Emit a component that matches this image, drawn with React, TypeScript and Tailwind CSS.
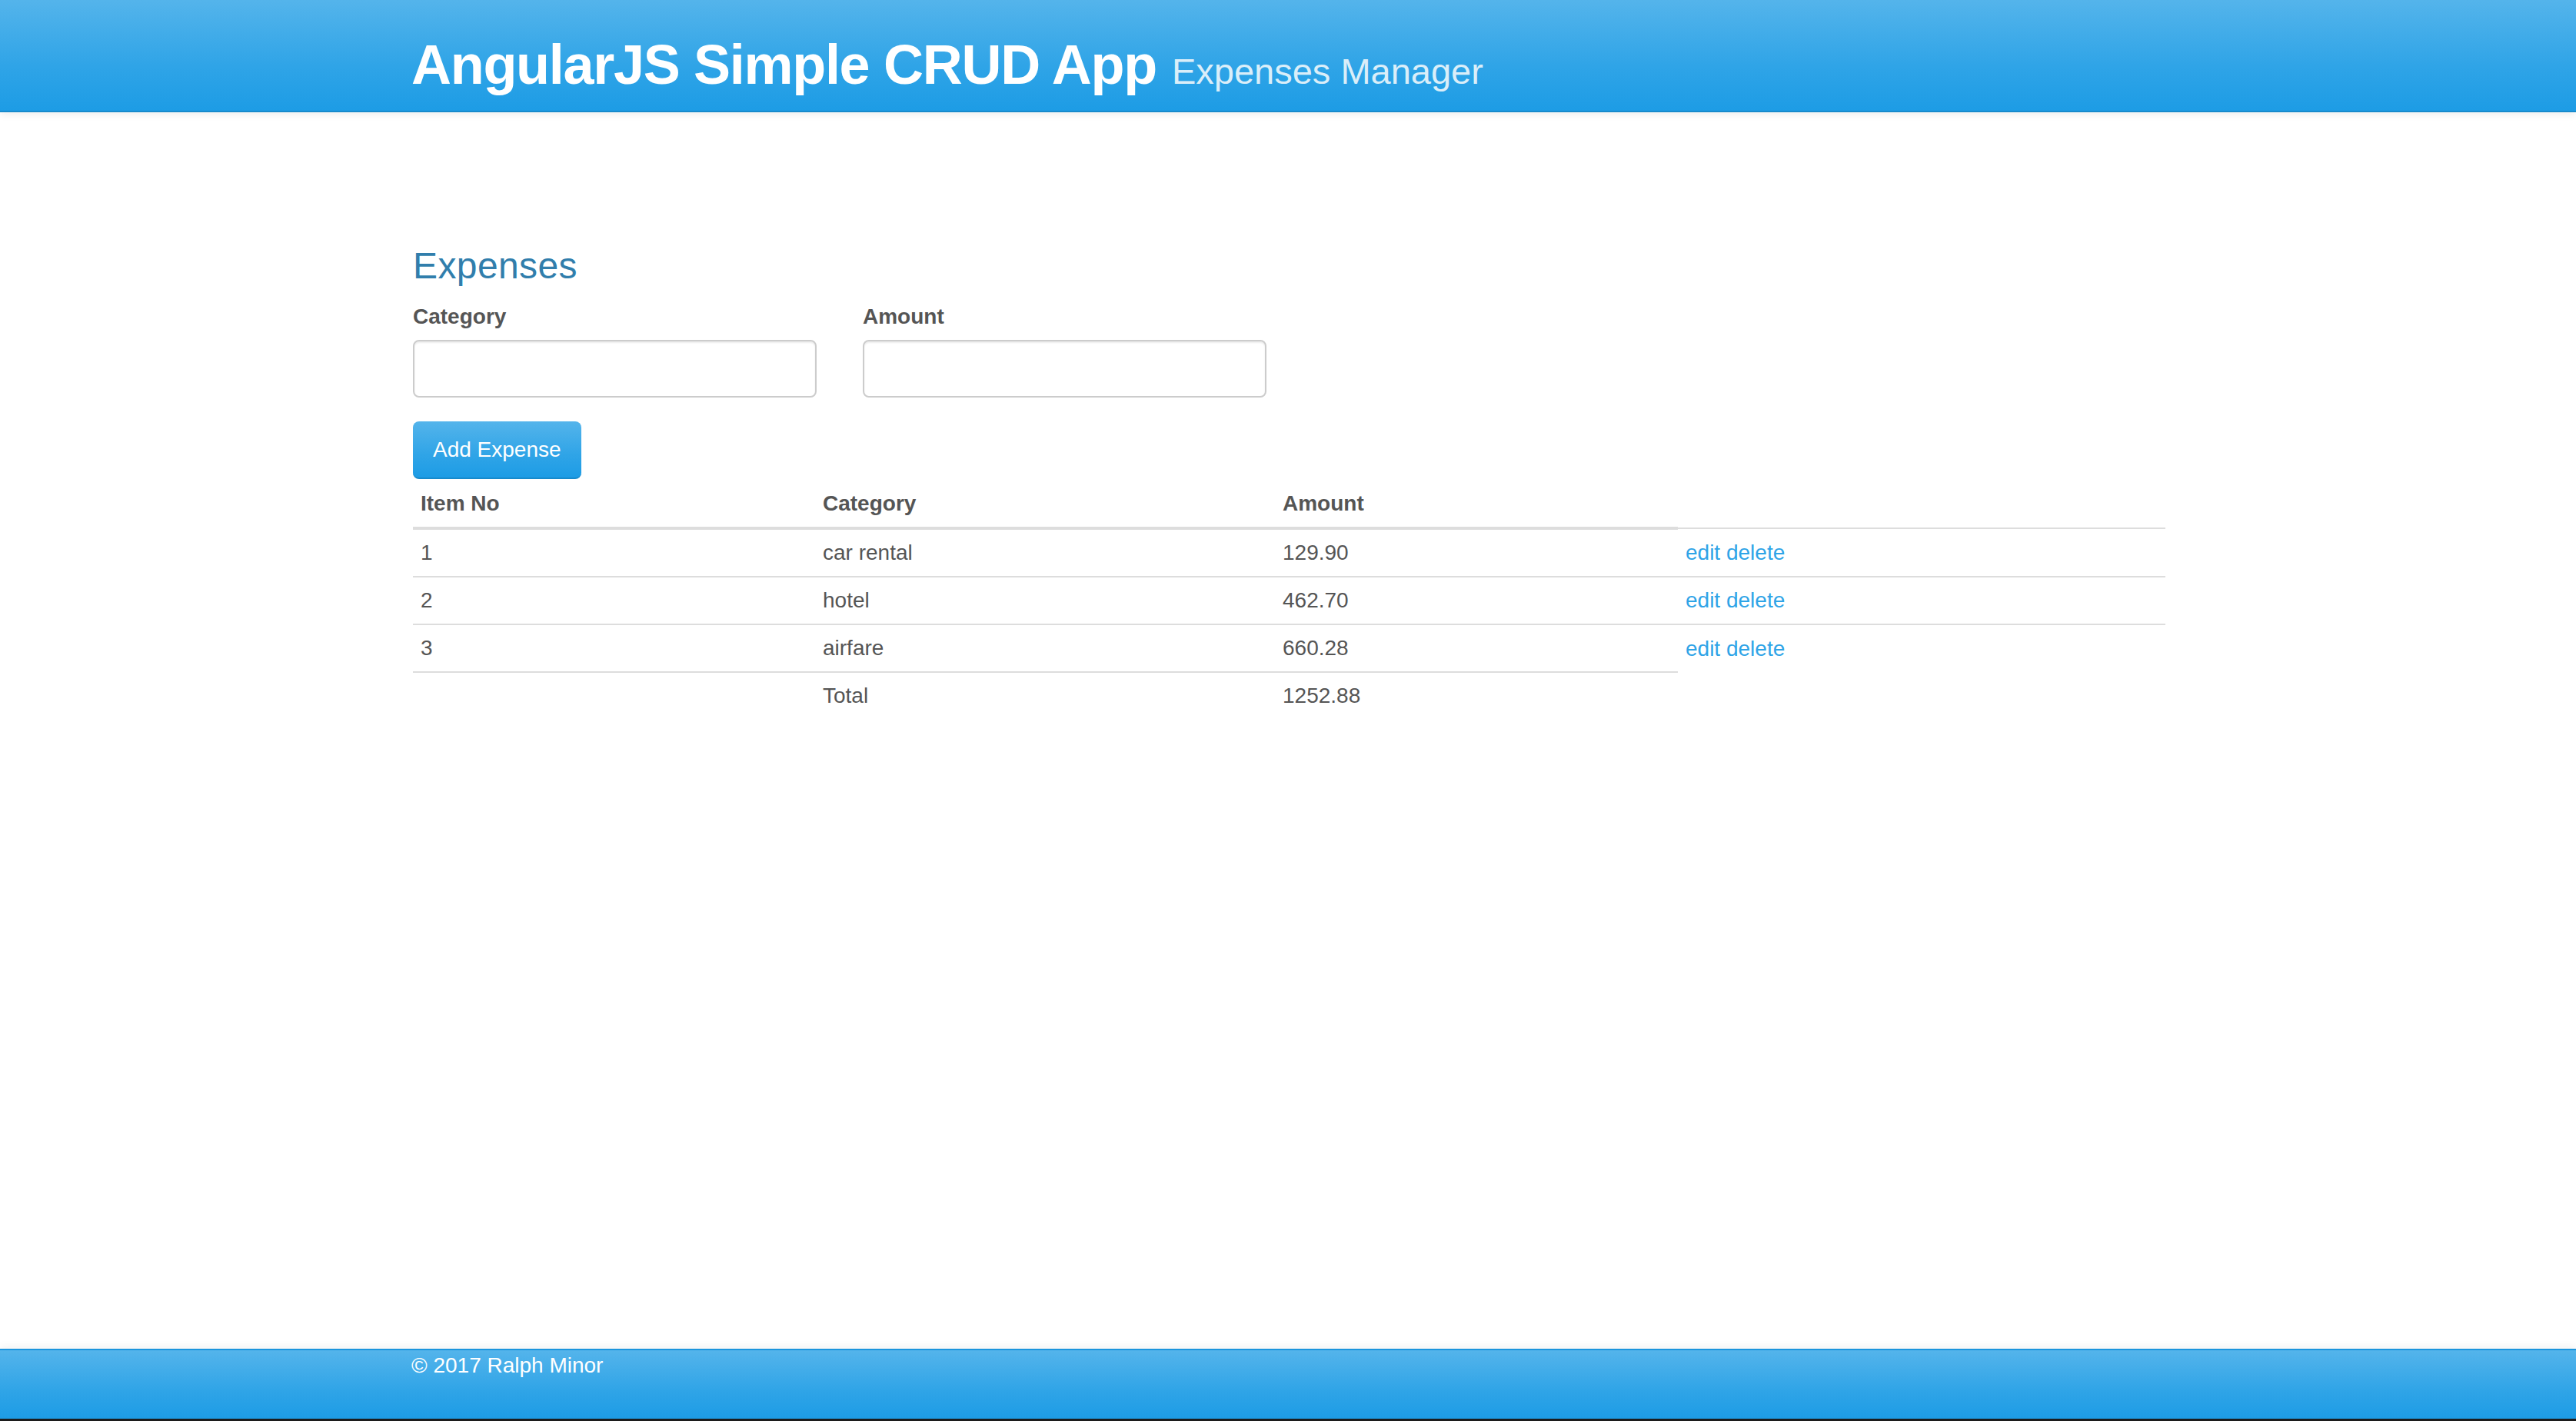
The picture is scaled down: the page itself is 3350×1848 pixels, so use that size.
import React from 'react';

type Expense = { id: number; category: string; amount: number };

const expenses: Expense[] = [
  { id: 1, category: 'car rental', amount: 129.9 },
  { id: 2, category: 'hotel', amount: 462.7 },
  { id: 3, category: 'airfare', amount: 660.28 },
];

const font = "font-['Liberation_Sans','Helvetica_Neue',Arial,sans-serif]";

const Header = () => (
  <header className="relative z-10 h-[146px] shrink-0 border-b-2 border-[#178acc] bg-[linear-gradient(#54b4eb,#2fa4e7_60%,#1d9ce5)] shadow-[0_3px_10px_rgba(0,0,0,0.07)]">
    <div className="mx-auto w-[2340px] px-[30px] pt-[45px]">
      <h1 className="text-[72px] leading-[79px] font-bold text-white whitespace-nowrap">
        <span className="tracking-[-1.3px]">AngularJS Simple CRUD App</span>{' '}
        <span className="text-[47px] font-normal text-[#daeef9]">Expenses Manager</span>
      </h1>
    </div>
  </header>
);

const Field = ({ label }: { label: string }) => (
  <div className="flex w-[525px] flex-col">
    <label className="mb-[10px] text-[28px] leading-[40px] font-bold text-[#555]">{label}</label>
    <input
      type="text"
      className="h-[75px] w-full rounded-[8px] border-2 border-[#ccc] bg-white px-[24px] text-[28px] text-[#555] shadow-[inset_0_2px_2px_rgba(0,0,0,0.075)] outline-none"
    />
  </div>
);

const ExpenseTable = () => {
  const total = expenses.reduce((sum, e) => sum + e.amount, 0);
  return (
    <table className="mt-[2px] w-[2279px] table-fixed border-collapse text-[28px] leading-[40px] text-[#555]">
      <colgroup>
        <col className="w-[523px]" />
        <col className="w-[598px]" />
        <col className="w-[524px]" />
        <col />
      </colgroup>
      <thead>
        <tr>
          <th className="border-b-4 border-[#ddd] px-[10px] py-[10px] text-left font-bold">Item No</th>
          <th className="border-b-4 border-[#ddd] px-[10px] py-[10px] text-left font-bold">Category</th>
          <th className="border-b-4 border-[#ddd] px-[10px] py-[10px] text-left font-bold">Amount</th>
        </tr>
      </thead>
      <tbody>
        {expenses.map((e) => (
          <tr key={e.id}>
            <td className="border-t-2 border-[#ddd] px-[10px] py-[10px]">{e.id}</td>
            <td className="border-t-2 border-[#ddd] px-[10px] py-[10px]">{e.category}</td>
            <td className="border-t-2 border-[#ddd] px-[10px] py-[10px]">{e.amount.toFixed(2)}</td>
            <td className="border-t-2 border-[#ddd] px-[10px] py-[10px] text-[#2fa4e7]">
              <a href="#">edit</a> <a href="#">delete</a>
            </td>
          </tr>
        ))}
        <tr>
          <td className="border-t-2 border-[#ddd] px-[10px] py-[10px]"></td>
          <td className="border-t-2 border-[#ddd] px-[10px] py-[10px]">Total</td>
          <td className="border-t-2 border-[#ddd] px-[10px] py-[10px]">{total.toFixed(2)}</td>
        </tr>
      </tbody>
    </table>
  );
};

export default function App() {
  return (
    <div className={`flex h-[1848px] flex-col bg-white ${font}`}>
      <Header />
      <main className="mx-auto w-[2340px] flex-1 pr-[30px] pl-[32px] pt-[173px]">
        <h3 className="mb-[20px] text-[48px] leading-[53px] font-medium tracking-[0.4px] text-[#317eac]">Expenses</h3>
        <div className="flex gap-[60px]">
          <Field label="Category" />
          <Field label="Amount" />
        </div>
        <button className="mt-[31px] flex h-[75px] items-center rounded-[8px] border-b-2 border-[#178acc] bg-[linear-gradient(#54b4eb,#2fa4e7_60%,#1d9ce5)] px-[26px] text-[28px] text-white">
          Add Expense
        </button>
        <ExpenseTable />
      </main>
      <footer className="h-[94px] shrink-0 border-t-2 border-b-[3px] border-t-[#1b95dd] border-b-[#1c1c1c] bg-[linear-gradient(#54b4eb,#2fa4e7_60%,#1d9ce5)] shadow-[0_-3px_10px_rgba(0,0,0,0.05)]">
        <div className="mx-auto w-[2340px] px-[30px] text-[28px] leading-[40px] text-white">© 2017 Ralph Minor</div>
      </footer>
    </div>
  );
}
